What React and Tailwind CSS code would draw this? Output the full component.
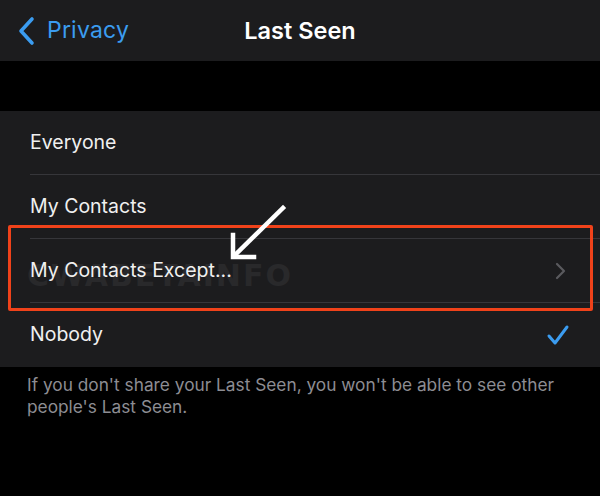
import React from "react";

const rows = ["Everyone", "My Contacts", "My Contacts Except...", "Nobody"];

export default function App() {
  return (
    <div className="w-[600px] h-[496px] bg-black overflow-hidden relative" style={{ fontFamily: "Inter, 'Noto Sans', sans-serif" }}>
      <div className="h-[61px] bg-[#1c1c1e] flex items-center relative">
        <div className="flex items-center pl-[17px] text-[#3b9cf0] text-[23px]">
          <svg width="20" height="30" viewBox="0 0 20 30" className="mr-[10px]">
            <path d="M15 3 L4 15 L15 27" fill="none" stroke="#3b9cf0" strokeWidth="3.6" strokeLinecap="round" strokeLinejoin="round" />
          </svg>
          <span className="tracking-[0.2px]">Privacy</span>
        </div>
        <div className="absolute left-0 right-0 text-center text-white text-[23.5px] font-semibold pointer-events-none">Last Seen</div>
      </div>
      <div className="h-[50px]" />
      <div className="bg-[#1c1c1e]">
        {rows.map((r, i) => (
          <div key={r} className="h-[64px] relative flex items-center pl-[30px] pr-[34px]">
            {i === 2 && (
              <div className="absolute left-[27px] top-[22px] text-[30px] font-black tracking-[2px] text-[#29292b] select-none leading-none" style={{ fontFamily: "'DejaVu Sans', sans-serif" }}>CWABETAINFO</div>
            )}
            <span className="relative text-[#f0f0f0] text-[19.5px] flex-1">{r}</span>
            {i === 2 && (
              <svg width="12" height="18" viewBox="0 0 12 18">
                <path d="M3 2 L10 9 L3 16" fill="none" stroke="#5a5a5e" strokeWidth="2.2" strokeLinecap="round" strokeLinejoin="round" />
              </svg>
            )}
            {i === 3 && (
              <svg width="24" height="22" viewBox="0 0 24 22" className="mr-[-4px]">
                <path d="M3 12 L9 19 L21 3" fill="none" stroke="#3b9cf0" strokeWidth="3" strokeLinecap="round" strokeLinejoin="round" />
              </svg>
            )}
            {i < 3 && <div className="absolute left-[30px] right-0 bottom-0 h-px bg-[#36363a]" />}
          </div>
        ))}
      </div>
      <div className="px-[27px] pt-[7px] text-[#8d8d93] text-[17.3px] leading-[22px]">
        If you don't share your Last Seen, you won't be able to see other people's Last Seen.
      </div>
      <div className="absolute left-[8px] top-[225px] w-[585px] h-[86px] border-[3px] border-[#f0421a] rounded-[2px]" />
      <svg className="absolute left-0 top-0" width="600" height="496" viewBox="0 0 600 496">
        <g fill="none" stroke="#ffffff" strokeWidth="4.5" strokeLinecap="square">
          <path d="M283 208 L236 254" />
          <path d="M233 235 L233 257 L254 257" strokeLinejoin="miter" />
        </g>
      </svg>
    </div>
  );
}
